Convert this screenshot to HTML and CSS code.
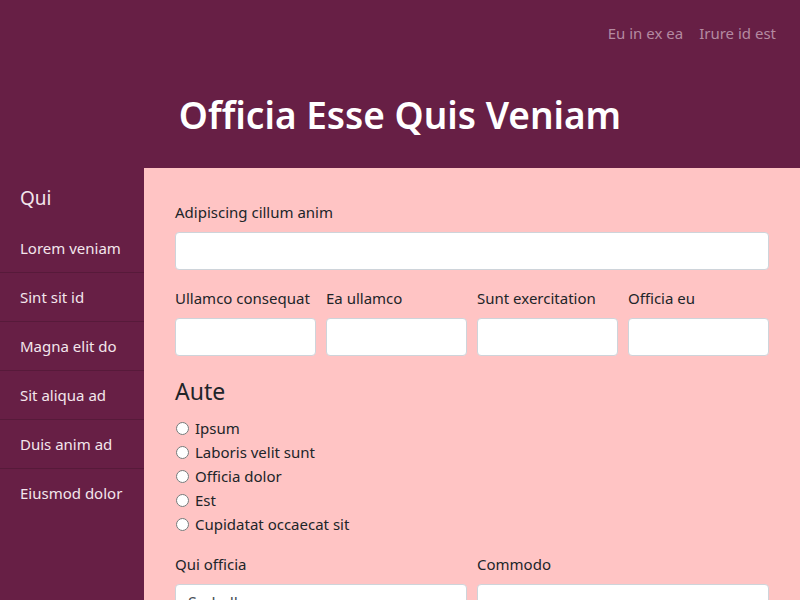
FILE: index.html
```html
<!DOCTYPE html>
<html lang="en">
<head>
<meta charset="utf-8">
<title>Officia Esse Quis Veniam</title>
<link rel="stylesheet" href="styles.css">
</head>
<body>
<header class="top">
  <nav class="top-nav">
    <a href="#">Eu in ex ea</a>
    <a href="#">Irure id est</a>
  </nav>
  <h1 class="title">Officia Esse Quis Veniam</h1>
</header>
<div class="page">
  <aside class="side">
    <h2 class="side-title">Qui</h2>
    <ul class="side-list">
      <li>Lorem veniam</li>
      <li>Sint sit id</li>
      <li>Magna elit do</li>
      <li>Sit aliqua ad</li>
      <li>Duis anim ad</li>
      <li>Eiusmod dolor</li>
    </ul>
  </aside>
  <main class="main">
    <div class="field">
      <label class="label">Adipiscing cillum anim</label>
      <input class="input" type="text">
    </div>
    <div class="row four">
      <div class="field"><label class="label">Ullamco consequat</label><input class="input" type="text"></div>
      <div class="field"><label class="label">Ea ullamco</label><input class="input" type="text"></div>
      <div class="field"><label class="label">Sunt exercitation</label><input class="input" type="text"></div>
      <div class="field"><label class="label">Officia eu</label><input class="input" type="text"></div>
    </div>
    <fieldset class="group">
      <legend class="group-title">Aute</legend>
      <label class="radio"><input type="radio" name="a"> Ipsum</label>
      <label class="radio"><input type="radio" name="a"> Laboris velit sunt</label>
      <label class="radio"><input type="radio" name="a"> Officia dolor</label>
      <label class="radio"><input type="radio" name="a"> Est</label>
      <label class="radio"><input type="radio" name="a"> Cupidatat occaecat sit</label>
    </fieldset>
    <div class="row two">
      <div class="field"><label class="label">Qui officia</label>
        <select class="input select"><option>Sed ullamco</option></select></div>
      <div class="field"><label class="label">Commodo</label><input class="input" type="text"></div>
    </div>
  </main>
</div>
</body>
</html>
```
FILE: styles.css
```css
* { box-sizing: border-box; }
html, body { margin: 0; padding: 0; }
body {
  font-family: "Noto Sans", "Open Sans", sans-serif;
  font-size: 16px;
  line-height: 24px;
  color: #212529;
  background: #ffc4c4;
  height: 600px;
  overflow: hidden;
}
.top {
  background: #671f45;
  height: 168px;
  padding: 21px 24px 0;
}
.top-nav {
  display: flex;
  justify-content: flex-end;
  gap: 16px;
}
.top-nav a {
  color: #b48aa1;
  text-decoration: none;
  font-size: 15px;
}
.title {
  margin: 48px 0 0;
  text-align: center;
  color: #fff;
  font-size: 37px;
  font-weight: 600;
  line-height: 44px;
}
.page {
  display: grid;
  grid-template-columns: 144px 1fr;
  min-height: 432px;
}
.side {
  background: #671f45;
  color: #f3e6ec;
}
.side-title {
  margin: 0;
  padding: 18px 20px 14px;
  font-size: 19px;
  font-weight: 400;
  line-height: 24px;
  height: 56px;
}
.side-list {
  list-style: none;
  margin: 0;
  padding: 0;
}
.side-list li {
  padding: 12px 20px;
  font-size: 15px;
}
.side-list li + li {
  border-top: 1px solid #571a3a;
}
.main {
  padding: 32px 31px 0 31px;
}
.field { display: flex; flex-direction: column; }
.label { display: block; margin-bottom: 8px; font-size: 15px; }
.input {
  height: 38px;
  border: 1px solid #ced4da;
  border-radius: 4px;
  background: #fff;
  font: inherit;
  padding: 6px 12px;
  width: 100%;
}
.row { display: grid; gap: 10px; margin-top: 16px; }
.row.four { grid-template-columns: repeat(4, 1fr); }
.row.two { grid-template-columns: repeat(2, 1fr); }
.group {
  border: 0;
  margin: 20px 0 0;
  padding: 0;
}
.group-title {
  padding: 0;
  font-size: 23px;
  line-height: 30px;
  margin-bottom: 10px;
}
.radio {
  display: flex;
  align-items: center;
  gap: 6px;
  font-size: 15px;
  line-height: 24px;
}
.radio input { margin: 0 0 0 1px; width: 13px; height: 13px; }
.select { color: #495057; appearance: none; }
```
